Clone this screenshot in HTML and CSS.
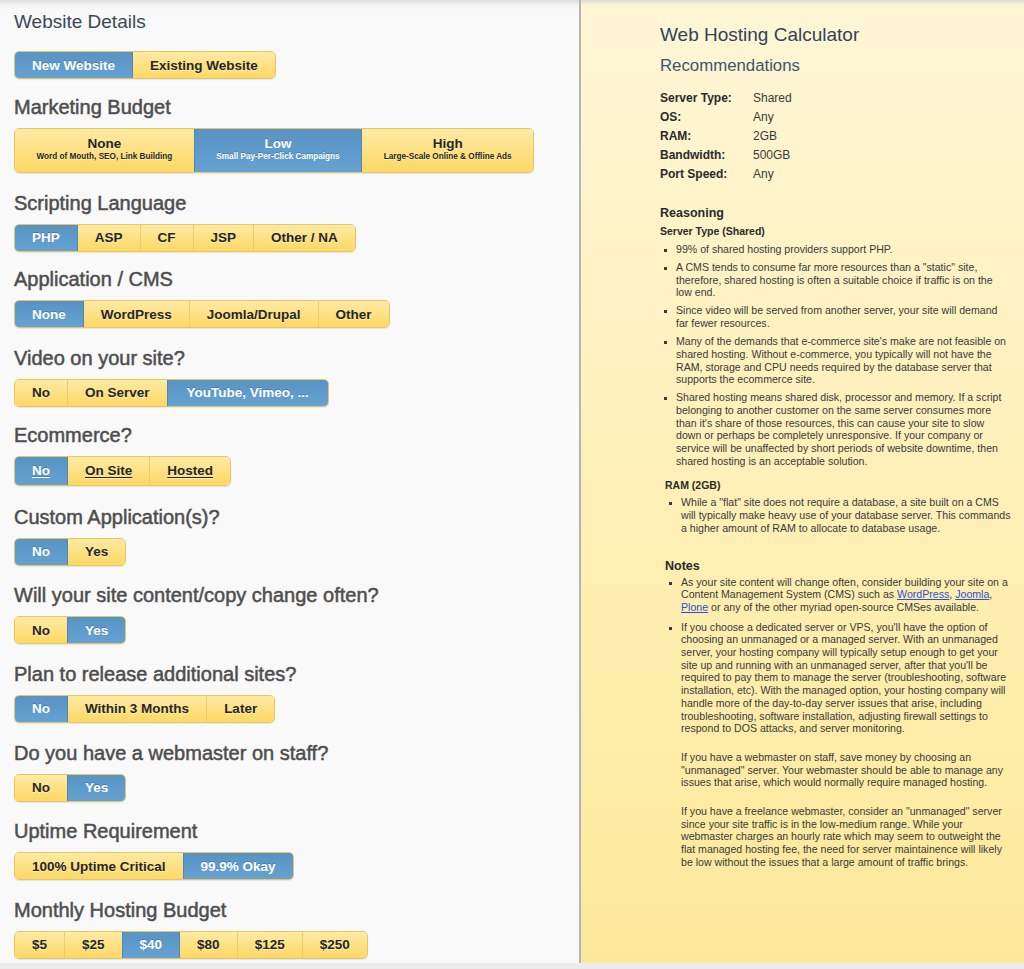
FILE: index.html
```html
<!DOCTYPE html>
<html lang="en">
<head>
<meta charset="utf-8">
<title>Web Hosting Calculator</title>
<link rel="stylesheet" href="styles.css">
</head>
<body>
<div class="page">
  <div class="left">
    <h2 class="lead">Website Details</h2>
    <div class="group"><span class="btn on">New Website</span><span class="btn">Existing Website</span></div>

    <h3 class="h-first">Marketing Budget</h3>
    <div class="group tall">
      <span class="btn"><b>None</b><small>Word of Mouth, SEO, Link Building</small></span><span class="btn on"><b>Low</b><small>Small Pay-Per-Click Campaigns</small></span><span class="btn"><b>High</b><small>Large-Scale Online &amp; Offline Ads</small></span>
    </div>

    <h3>Scripting Language</h3>
    <div class="group"><span class="btn on">PHP</span><span class="btn">ASP</span><span class="btn">CF</span><span class="btn">JSP</span><span class="btn">Other / NA</span></div>

    <h3 class="h-tight">Application / CMS</h3>
    <div class="group"><span class="btn on">None</span><span class="btn">WordPress</span><span class="btn">Joomla/Drupal</span><span class="btn">Other</span></div>

    <h3>Video on your site?</h3>
    <div class="group"><span class="btn">No</span><span class="btn">On Server</span><span class="btn on wide">YouTube, Vimeo, ...</span></div>

    <h3 class="h-ecom">Ecommerce?</h3>
    <div class="group under"><span class="btn on">No</span><span class="btn">On Site</span><span class="btn">Hosted</span></div>

    <h3 class="h-custom">Custom Application(s)?</h3>
    <div class="group"><span class="btn on">No</span><span class="btn">Yes</span></div>

    <h3>Will your site content/copy change often?</h3>
    <div class="group"><span class="btn">No</span><span class="btn on">Yes</span></div>

    <h3>Plan to release additional sites?</h3>
    <div class="group"><span class="btn on">No</span><span class="btn">Within 3 Months</span><span class="btn">Later</span></div>

    <h3>Do you have a webmaster on staff?</h3>
    <div class="group"><span class="btn">No</span><span class="btn on">Yes</span></div>

    <h3>Uptime Requirement</h3>
    <div class="group"><span class="btn">100% Uptime Critical</span><span class="btn on">99.9% Okay</span></div>

    <h3>Monthly Hosting Budget</h3>
    <div class="group"><span class="btn">$5</span><span class="btn">$25</span><span class="btn on">$40</span><span class="btn">$80</span><span class="btn">$125</span><span class="btn">$250</span></div>
  </div>

  <div class="right">
    <h1>Web Hosting Calculator</h1>
    <h2>Recommendations</h2>
    <dl class="recs">
      <dt>Server Type:</dt><dd>Shared</dd>
      <dt>OS:</dt><dd>Any</dd>
      <dt>RAM:</dt><dd>2GB</dd>
      <dt>Bandwidth:</dt><dd>500GB</dd>
      <dt>Port Speed:</dt><dd>Any</dd>
    </dl>

    <h4>Reasoning</h4>
    <h5>Server Type (Shared)</h5>
    <ul>
      <li>99% of shared hosting providers support PHP.</li>
      <li>A CMS tends to consume far more resources than a "static" site, therefore, shared hosting is often a suitable choice if traffic is on the low end.</li>
      <li>Since video will be served from another server, your site will demand far fewer resources.</li>
      <li>Many of the demands that e-commerce site's make are not feasible on shared hosting. Without e-commerce, you typically will not have the RAM, storage and CPU needs required by the database server that supports the ecommerce site.</li>
      <li>Shared hosting means shared disk, processor and memory. If a script belonging to another customer on the same server consumes more than it's share of those resources, this can cause your site to slow down or perhaps be completely unresponsive. If your company or service will be unaffected by short periods of website downtime, then shared hosting is an acceptable solution.</li>
    </ul>

    <div class="lower">
      <h5 class="ram">RAM (2GB)</h5>
      <ul class="ram-list">
        <li>While a "flat" site does not require a database, a site built on a CMS will typically make heavy use of your database server. This commands a higher amount of RAM to allocate to database usage.</li>
      </ul>

      <h4 class="notes">Notes</h4>
      <ul class="notes-list">
        <li>As your site content will change often, consider building your site on a Content Management System (CMS) such as <a href="#">WordPress</a>, <a href="#">Joomla</a>, <a href="#">Plone</a> or any of the other myriad open-source CMSes available.</li>
        <li>If you choose a dedicated server or VPS, you'll have the option of choosing an unmanaged or a managed server. With an unmanaged server, your hosting company will typically setup enough to get your site up and running with an unmanaged server, after that you'll be required to pay them to manage the server (troubleshooting, software installation, etc). With the managed option, your hosting company will handle more of the day-to-day server issues that arise, including troubleshooting, software installation, adjusting firewall settings to respond to DOS attacks, and server monitoring.
          <p>If you have a webmaster on staff, save money by choosing an "unmanaged" server. Your webmaster should be able to manage any issues that arise, which would normally require managed hosting.</p>
          <p>If you have a freelance webmaster, consider an "unmanaged" server since your site traffic is in the low-medium range. While your webmaster charges an hourly rate which may seem to outweight the flat managed hosting fee, the need for server maintainence will likely be low without the issues that a large amount of traffic brings.</p>
        </li>
      </ul>
    </div>
  </div>
</div>
</body>
</html>
```

FILE: styles.css
```css
html, body {
  margin: 0;
  padding: 0;
}
body {
  background: #ebebeb;
  font-family: "Liberation Sans", Arial, Helvetica, sans-serif;
  width: 1024px;
  height: 969px;
  overflow: hidden;
}
.page {
  display: flex;
  height: 963px;
}
.left {
  width: 579px;
  flex: none;
  box-sizing: border-box;
  padding: 10px 0 0 14px;
  background: linear-gradient(#dedede 0, #f3f3f3 5px, #f9f9f9 10px, #f9f9f9 100%);
}
.lead {
  font-size: 19px;
  font-weight: normal;
  line-height: 24px;
  color: #3c4854;
  margin: 0 0 17px;
}
.left h3 {
  font-size: 20px;
  font-weight: normal;
  line-height: 24px;
  color: #4e4e4e;
  -webkit-text-stroke: 0.5px #4e4e4e;
  margin: 17.6px 0 9px;
}
.left h3.h-first {
  margin-top: 16px;
}
.left h3.h-tight {
  margin-top: 15.6px;
}
.left h3.h-ecom {
  margin-top: 16px;
}
.left h3.h-custom {
  margin-top: 19px;
}
.group {
  display: inline-flex;
  vertical-align: top;
  border: 1px solid #e6c763;
  border-radius: 5px;
  overflow: hidden;
  box-shadow: 0 1px 1px rgba(0, 0, 0, 0.08);
}
.btn {
  display: flex;
  align-items: center;
  justify-content: center;
  height: 26px;
  padding: 0 17px;
  font-size: 13.5px;
  font-weight: bold;
  color: #262626;
  text-shadow: 0 1px 0 rgba(255, 255, 255, 0.45);
  background: linear-gradient(#feeaa3, #fdd865);
  border-left: 1px solid #eccd6e;
  white-space: nowrap;
}
.btn:first-child {
  border-left: none;
}
.btn.on {
  color: #fff;
  text-shadow: 0 -1px 0 rgba(0, 0, 0, 0.2);
  background: linear-gradient(#5893c4, #65a2d2);
  border-left-color: #4f88b8;
}
.btn.on + .btn {
  border-left-color: #4f88b8;
}
.btn.wide {
  padding: 0 19px;
}
.group.tall .btn {
  height: 43px;
  flex-direction: column;
  padding: 0 21.5px 3px;
  box-sizing: border-box;
}
.group.tall b {
  font-size: 13.5px;
  line-height: 15px;
}
.group.tall small {
  font-size: 8.2px;
  line-height: 12px;
}
.group.under .btn {
  text-decoration: underline;
  text-underline-offset: 2px;
  height: 28px;
}

.right {
  flex: 1;
  border-left: 2px solid #b4b4b4;
  background: linear-gradient(#dcdcdc 0, #fdf5d6 5px, #fff6d6 10px, #fef1bd 40%, #fdeca6 80%, #fce89a 100%);
  padding: 0 15px 0 79px;
  color: #333;
}
.right h1 {
  font-size: 19px;
  font-weight: normal;
  color: #2f4458;
  line-height: 24px;
  margin: 23px 0 0;
}
.right h2 {
  font-size: 16.8px;
  font-weight: normal;
  color: #3b5670;
  line-height: 22px;
  margin: 8px 0 0;
}
.recs {
  display: grid;
  grid-template-columns: 93px auto;
  grid-auto-rows: 18.8px;
  margin: 12px 0 0;
  font-size: 12px;
  align-items: center;
}
.recs dt {
  font-weight: bold;
  color: #2a2a2a;
}
.recs dd {
  margin: 0;
  color: #3a3a3a;
}
.right h4 {
  font-size: 12.5px;
  font-weight: bold;
  color: #2a2a2a;
  margin: 22px 0 0;
  line-height: 16px;
}
.right h5 {
  font-size: 10.5px;
  font-weight: bold;
  color: #2a2a2a;
  margin: 3px 0 0;
  line-height: 14px;
}
.right ul {
  list-style: square;
  margin: 5px 0 0;
  padding: 0 0 0 16px;
  font-size: 10.6px;
  line-height: 12.7px;
  color: #3a3a3a;
}
.right li {
  margin: 0 0 5.3px;
}
.right li::marker {
  font-size: 9px;
}
.lower {
  margin-left: 5px;
  margin-right: -5px;
}
.right h5.ram {
  margin-top: 11px;
}
.right ul.ram-list {
  margin-top: 4px;
}
.right h4.notes {
  margin-top: 23px;
}
.right ul.notes-list {
  margin-top: 2px;
}
.right ul.notes-list li {
  margin-bottom: 7px;
}
.right p {
  margin: 16px 0 0;
}
.right a {
  color: #2b4fd6;
}
```
